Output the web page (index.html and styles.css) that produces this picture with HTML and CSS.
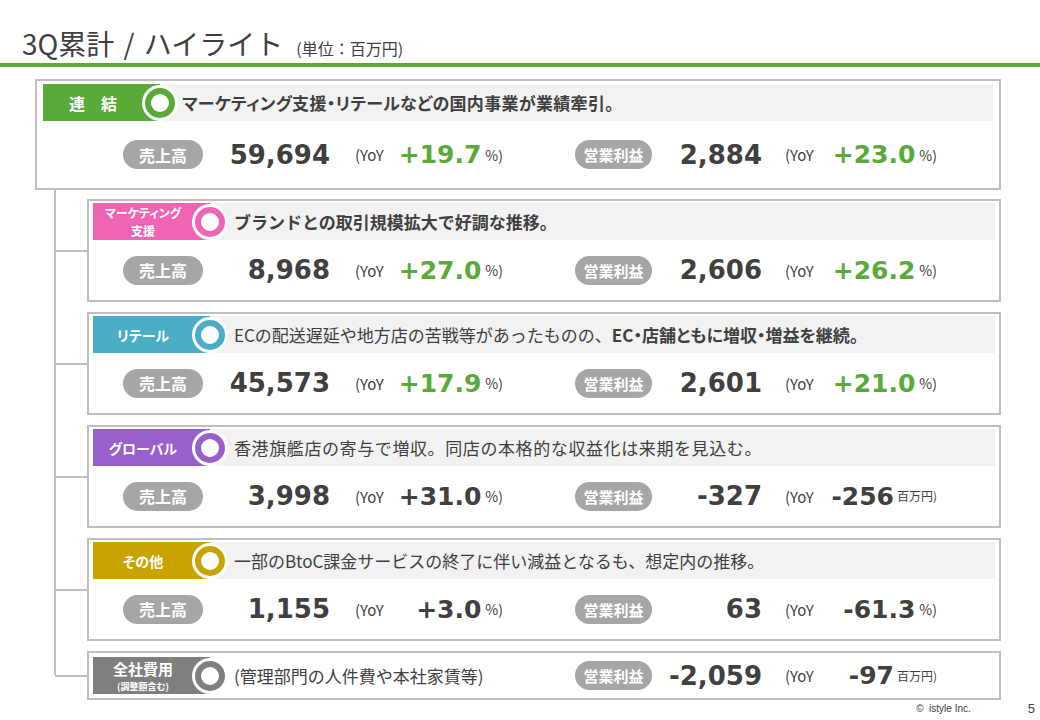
FILE: index.html
```html
<!DOCTYPE html>
<html lang="ja">
<head>
<meta charset="utf-8">
<title>3Q累計 / ハイライト</title>
<link rel="stylesheet" href="styles.css">
</head>
<body>
<header class="title-bar">
  <h1 class="title">3Q累計 / ハイライト<span class="unit-note">(単位：百万円)</span></h1>
</header>
<main class="board">
  <section class="card card-main">
    <div class="band">
      <div class="label c-green"><span class="label-main">連　結</span></div>
      <div class="ring r-green"></div>
      <p class="summary bold">マーケティング支援・リテールなどの国内事業が業績牽引。</p>
    </div>
    <div class="metrics">
      <div class="metric metric-sales">
        <span class="pill">売上高</span>
        <span class="value">59,694</span>
        <span class="yoy-label">(YoY</span>
        <span class="yoy"><b class="yoy-num up">+19.7</b><span class="yoy-unit">%)</span></span>
      </div>
      <div class="metric metric-op">
        <span class="pill pill-op">営業利益</span>
        <span class="value">2,884</span>
        <span class="yoy-label">(YoY</span>
        <span class="yoy"><b class="yoy-num up">+23.0</b><span class="yoy-unit">%)</span></span>
      </div>
    </div>
  </section>

  <div class="branches">
    <section class="card card-sub">
      <div class="band">
        <div class="label c-pink">
          <div class="label-stack">
            <span class="stack-line">マーケティング</span>
            <span class="stack-line">支援</span>
          </div>
        </div>
        <div class="ring r-pink"></div>
        <p class="summary bold">ブランドとの取引規模拡大で好調な推移。</p>
      </div>
      <div class="metrics">
        <div class="metric metric-sales">
          <span class="pill">売上高</span>
          <span class="value">8,968</span>
          <span class="yoy-label">(YoY</span>
          <span class="yoy"><b class="yoy-num up">+27.0</b><span class="yoy-unit">%)</span></span>
        </div>
        <div class="metric metric-op">
          <span class="pill pill-op">営業利益</span>
          <span class="value">2,606</span>
          <span class="yoy-label">(YoY</span>
          <span class="yoy"><b class="yoy-num up">+26.2</b><span class="yoy-unit">%)</span></span>
        </div>
      </div>
    </section>

    <section class="card card-sub">
      <div class="band">
        <div class="label c-blue"><span class="label-seg">リテール</span></div>
        <div class="ring r-blue"></div>
        <p class="summary">ECの配送遅延や地方店の苦戦等があったものの、<b class="tight">EC・店舗ともに増収・増益を継続。</b></p>
      </div>
      <div class="metrics">
        <div class="metric metric-sales">
          <span class="pill">売上高</span>
          <span class="value">45,573</span>
          <span class="yoy-label">(YoY</span>
          <span class="yoy"><b class="yoy-num up">+17.9</b><span class="yoy-unit">%)</span></span>
        </div>
        <div class="metric metric-op">
          <span class="pill pill-op">営業利益</span>
          <span class="value">2,601</span>
          <span class="yoy-label">(YoY</span>
          <span class="yoy"><b class="yoy-num up">+21.0</b><span class="yoy-unit">%)</span></span>
        </div>
      </div>
    </section>

    <section class="card card-sub">
      <div class="band">
        <div class="label c-purple"><span class="label-seg">グローバル</span></div>
        <div class="ring r-purple"></div>
        <p class="summary wide">香港旗艦店の寄与で増収。同店の本格的な収益化は来期を見込む。</p>
      </div>
      <div class="metrics">
        <div class="metric metric-sales">
          <span class="pill">売上高</span>
          <span class="value">3,998</span>
          <span class="yoy-label">(YoY</span>
          <span class="yoy"><b class="yoy-num">+31.0</b><span class="yoy-unit">%)</span></span>
        </div>
        <div class="metric metric-op">
          <span class="pill pill-op">営業利益</span>
          <span class="value">-327</span>
          <span class="yoy-label">(YoY</span>
          <span class="yoy"><b class="yoy-num">-256</b><span class="yoy-unit yen">百万円)</span></span>
        </div>
      </div>
    </section>

    <section class="card card-sub">
      <div class="band">
        <div class="label c-gold"><span class="label-seg">その他</span></div>
        <div class="ring r-gold"></div>
        <p class="summary">一部のBtoC課金サービスの終了に伴い減益となるも、想定内の推移。</p>
      </div>
      <div class="metrics">
        <div class="metric metric-sales">
          <span class="pill">売上高</span>
          <span class="value">1,155</span>
          <span class="yoy-label">(YoY</span>
          <span class="yoy"><b class="yoy-num">+3.0</b><span class="yoy-unit">%)</span></span>
        </div>
        <div class="metric metric-op">
          <span class="pill pill-op">営業利益</span>
          <span class="value">63</span>
          <span class="yoy-label">(YoY</span>
          <span class="yoy"><b class="yoy-num">-61.3</b><span class="yoy-unit">%)</span></span>
        </div>
      </div>
    </section>

    <section class="card card-sub card-corp">
      <div class="label c-gray">
        <div class="label-stack">
          <span class="corp-main">全社費用</span>
          <span class="corp-sub">(調整額含む)</span>
        </div>
      </div>
      <div class="ring r-gray"></div>
      <p class="summary desc">(管理部門の人件費や本社家賃等)</p>
      <div class="metric metric-op">
        <span class="pill pill-op">営業利益</span>
        <span class="value">-2,059</span>
        <span class="yoy-label">(YoY</span>
        <span class="yoy"><b class="yoy-num">-97</b><span class="yoy-unit yen">百万円)</span></span>
      </div>
    </section>
  </div>
</main>
<footer class="footer">
  <span class="copy">©&nbsp; istyle Inc.</span>
  <span class="page">5</span>
</footer>
</body>
</html>
```

FILE: styles.css
```css
* {
  box-sizing: border-box;
}

body {
  margin: 0;
  width: 1040px;
  height: 720px;
  overflow: hidden;
  background: #ffffff;
  color: #404040;
  font-family: "Noto Sans CJK JP", "Noto Sans", sans-serif;
}

/* ---------- title ---------- */
.title-bar {
  height: 67px;
  border-bottom: 4px solid #5aaa3a;
  padding-left: 22px;
  display: flex;
  align-items: flex-end;
}

.title {
  margin: 0 0 2px;
  font-size: 28px;
  font-weight: 400;
  line-height: 1.2;
  color: #404040;
  display: flex;
  align-items: baseline;
  word-spacing: 3px;
}

.unit-note {
  font-size: 16px;
  margin-left: 13px;
  word-spacing: 0;
}

/* ---------- board ---------- */
.board {
  padding: 12px 39px 0 35px;
}

.card {
  border: 2px solid #bfbfbf;
  background: #ffffff;
}

.card-main {
  padding: 3px 6px 0;
  height: 111px;
}

.card-sub {
  position: relative;
  padding: 2px 4px 0;
  height: 103px;
}

.card-sub::before {
  content: "";
  position: absolute;
  left: -34px;
  top: 50%;
  margin-top: -1px;
  width: 32px;
  height: 2px;
  background: #bfbfbf;
}

.branches {
  position: relative;
  padding: 9px 0 0 52px;
  display: flex;
  flex-direction: column;
  gap: 10px;
}

.branches::before {
  content: "";
  position: absolute;
  left: 19px;
  top: 0;
  bottom: 25px;
  width: 2px;
  background: #bfbfbf;
}

/* ---------- band ---------- */
.band {
  height: 37px;
  background: #f2f2f2;
  display: flex;
  align-items: center;
}

.label {
  flex: none;
  width: 117px;
  height: 37px;
  padding-right: 17px;
  display: flex;
  align-items: center;
  justify-content: center;
  color: #ffffff;
  font-weight: 700;
  text-align: center;
  overflow: hidden;
}

.label-main {
  font-size: 16px;
}

.label-seg {
  font-size: 14px;
  font-feature-settings: "palt";
}

.label-stack {
  display: flex;
  flex-direction: column;
  align-items: center;
  font-feature-settings: "palt";
}

.stack-line {
  font-size: 12px;
  line-height: 17.5px;
}

.corp-main {
  font-size: 15px;
  line-height: 22px;
}

.corp-sub {
  font-size: 9px;
  line-height: 13px;
  font-weight: 700;
}

.c-green { background: #5aaa3a; }
.c-pink { background: #f064b4; }
.c-blue { background: #4bacc6; }
.c-purple { background: #9a5fcb; }
.c-gold { background: #c9a400; }
.c-gray { background: #7f7f7f; }

.ring {
  flex: none;
  width: 30px;
  height: 30px;
  margin-left: -15px;
  border-radius: 50%;
  border: 6.5px solid #5aaa3a;
  background: #ffffff;
  box-shadow: 0 0 0 3px #ffffff;
}

.r-green { border-color: #5aaa3a; }
.r-pink { border-color: #f064b4; }
.r-blue { border-color: #4bacc6; }
.r-purple { border-color: #9a5fcb; }
.r-gold { border-color: #c9a400; }
.r-gray { border-color: #7f7f7f; }

.summary {
  margin: 0 0 0 9px;
  font-size: 17px;
  line-height: 1;
  white-space: nowrap;
  color: #404040;
}

.card-main .summary {
  margin-left: 7px;
  font-feature-settings: "palt";
  letter-spacing: 0.3px;
}

.summary.bold,
.summary b {
  font-weight: 700;
}

.summary .tight {
  font-feature-settings: "palt";
}

.summary.wide {
  letter-spacing: 0.6px;
}

/* ---------- metrics ---------- */
.metrics {
  display: flex;
  align-items: center;
  height: 60px;
  padding-left: 30px;
}

.card-main .metrics {
  height: 67px;
  padding-left: 80px;
}

.metric {
  display: grid;
  align-items: center;
}

.metric-sales {
  grid-template-columns: 80px 127px 60px 113px;
}

.metric-op {
  grid-template-columns: 77px 110px 58px 117px;
  margin-left: 72px;
}

.pill {
  height: 29px;
  border-radius: 15px;
  background: #a6a6a6;
  color: #ffffff;
  font-weight: 700;
  font-size: 16px;
  display: flex;
  align-items: center;
  justify-content: center;
}

.pill-op {
  font-size: 15px;
}

.value {
  font-family: "DejaVu Sans", sans-serif;
  font-weight: 700;
  font-size: 26px;
  line-height: 1;
  text-align: right;
  color: #404040;
}

.yoy-label {
  padding-left: 25px;
  font-size: 15px;
  line-height: 1;
}

.metric-op .yoy-label {
  padding-left: 23px;
}

.yoy {
  display: flex;
  justify-content: flex-end;
  align-items: center;
  white-space: nowrap;
}

.yoy-num {
  font-family: "DejaVu Sans", sans-serif;
  font-weight: 700;
  font-size: 25px;
  line-height: 1;
  color: #404040;
}

.yoy-num.up {
  color: #5aaa3a;
}

.yoy-unit {
  margin-left: 4px;
  font-size: 14px;
  line-height: 1;
}

.yoy-unit.yen {
  font-size: 12px;
  margin-left: 3px;
}

/* ---------- corporate card ---------- */
.card-corp {
  height: 49px;
  padding: 4px;
  display: flex;
  align-items: center;
}

.desc {
  flex: none;
  width: 341px;
  margin-left: 9px;
  font-weight: 400;
}

.card-corp .metric-op {
  margin-left: 0;
}

/* ---------- footer ---------- */
.footer {
  height: 16px;
  display: flex;
  justify-content: flex-end;
  align-items: center;
  padding-right: 5px;
  font-family: "Liberation Sans", Arial, sans-serif;
  color: #404040;
}

.copy {
  font-size: 10px;
  margin-right: 57px;
}

.page {
  font-size: 13px;
}
```
